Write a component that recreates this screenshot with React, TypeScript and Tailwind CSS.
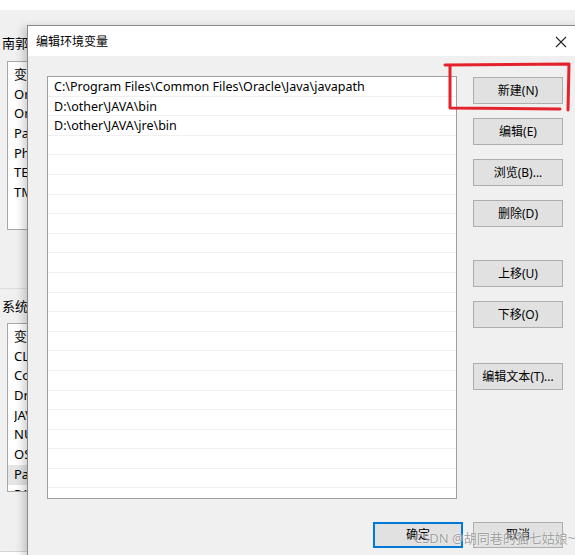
import React from "react";

const userVars = ["变量", "OneDrive", "OneDriveConsumer", "Path", "PhpStorm", "TEMP", "TMP"];
const sysVars = [
  "变量",
  "CLASSPATH",
  "ComSpec",
  "DriverData",
  "JAVA_HOME",
  "NUMBER_OF_PROCESSORS",
  "OS",
  "Path",
  "PATHEXT",
];
const paths = [
  "C:\\Program Files\\Common Files\\Oracle\\Java\\javapath",
  "D:\\other\\JAVA\\bin",
  "D:\\other\\JAVA\\jre\\bin",
];

const font = { fontFamily: '"Noto Sans", "Noto Sans CJK SC", sans-serif' };

function Btn({ label, className = "" }: { label: string; className?: string }) {
  return (
    <div
      className={`w-[90px] h-[27px] flex items-center justify-center bg-[#e1e1e1] border border-[#adadad] text-[12px] text-black ${className}`}
    >
      {label}
    </div>
  );
}

export default function App() {
  const rows = Array.from({ length: 22 }, (_, i) => paths[i] ?? "");
  return (
    <div className="relative w-[575px] h-[555px] overflow-hidden bg-white" style={font}>
      {/* background window */}
      <div className="absolute left-[-10px] top-[10px] w-[600px] h-[542px] bg-[#f0f0f0] border-b border-[#d4d4d4] flex flex-col pl-[12px]">
        <div className="mt-[24px] w-[26px] overflow-hidden whitespace-nowrap h-[18px] leading-[18px] text-[13px] text-black">南郭的用户变量(U)</div>
        <div className="mt-[9px] ml-[5px] w-[400px] h-[169px] bg-white border border-[#a8a8a8] pt-[3px] flex flex-col">
          {userVars.map((v) => (
            <div key={v} className="h-[19.7px] w-[28px] overflow-hidden whitespace-nowrap leading-[19.7px] pl-[6px] text-[13px] text-black">
              {v}
            </div>
          ))}
        </div>
        <div className="mt-[58px] -ml-[12px] h-px bg-[#dcdcdc]" />
        <div className="mt-[8px] w-[26px] overflow-hidden whitespace-nowrap h-[18px] leading-[18px] text-[13px] text-black">系统变量(S)</div>
        <div className="mt-[8px] ml-[5px] w-[400px] h-[169px] bg-white border border-[#a8a8a8] pt-[3px] flex flex-col overflow-hidden">
          {sysVars.map((v, i) => (
            <div
              key={v + i}
              className={`h-[19.7px] shrink-0 leading-[19.7px] pl-[6px] text-[13px] text-black ${i === 7 ? "bg-[#e5e5e5]" : ""}`}
            >
              <div className="w-[22px] overflow-hidden whitespace-nowrap">{v}</div>
            </div>
          ))}
        </div>
      </div>

      {/* dialog */}
      <div className="absolute left-[27px] top-[25px] w-[560px] h-[540px] border border-[#8a8a8a] bg-[#f0f0f0] shadow-[-4px_2px_8px_rgba(0,0,0,0.18)] flex flex-col">
        <div className="h-[30px] bg-white flex items-center pl-[8px] pt-[1px]">
          <span className="text-[12px] text-black">编辑环境变量</span>
          <svg className="ml-auto mr-[19px]" width="12" height="12" viewBox="0 0 12 12">
            <path d="M1 1 L11 11 M11 1 L1 11" stroke="#222" strokeWidth="1.1" />
          </svg>
        </div>
        <div className="pl-[19px] pt-[20px] w-[535px] flex flex-col">
          <div className="flex">
            <div className="w-[410px] h-[423px] bg-white border border-[#a0a0a0] overflow-hidden flex flex-col">
              {rows.map((p, i) => (
                <div
                  key={i}
                  className="h-[19.6px] shrink-0 border-b border-[#f0f0f0] pl-[6px] pt-[2px] flex items-center text-[12.5px] text-black whitespace-nowrap"
                >
                  {p}
                </div>
              ))}
            </div>
            <div className="ml-[16px] pt-[1px] flex flex-col">
              <Btn label="新建(N)" />
              <Btn label="编辑(E)" className="mt-[14px]" />
              <Btn label="浏览(B)..." className="mt-[14px]" />
              <Btn label="删除(D)" className="mt-[14px]" />
              <Btn label="上移(U)" className="mt-[33px]" />
              <Btn label="下移(O)" className="mt-[14px]" />
              <Btn label="编辑文本(T)..." className="mt-[35px]" />
            </div>
          </div>
          <div className="mt-[23px] flex justify-end gap-[10px]">
            <div className="w-[90px] h-[26px] flex items-center justify-center bg-[#e1e1e1] border border-[#0078d7] shadow-[inset_0_0_0_1px_#0078d7] text-[12px] text-black">
              确定
            </div>
            <div className="w-[90px] h-[26px] flex items-center justify-center bg-[#e1e1e1] border border-[#adadad] text-[12px] text-black">
              取消
            </div>
          </div>
        </div>
      </div>

      {/* red annotation */}
      <svg className="absolute left-0 top-0 pointer-events-none" width="575" height="555">
        <path
          d="M445 65 L569 64 L568 110 M450 66 L450 108 L560 109"
          stroke="#e4222b"
          strokeWidth="3"
          fill="none"
          strokeLinecap="round"
          strokeLinejoin="round"
        />
      </svg>

      {/* watermark */}
      <div className="absolute left-[414px] top-[529px] text-[13px] leading-[18px] text-[#8c8c8c]/80 [text-shadow:0_0_2px_#fff] whitespace-nowrap">
        CSDN @胡同巷的猫七姑娘~
      </div>
    </div>
  );
}
